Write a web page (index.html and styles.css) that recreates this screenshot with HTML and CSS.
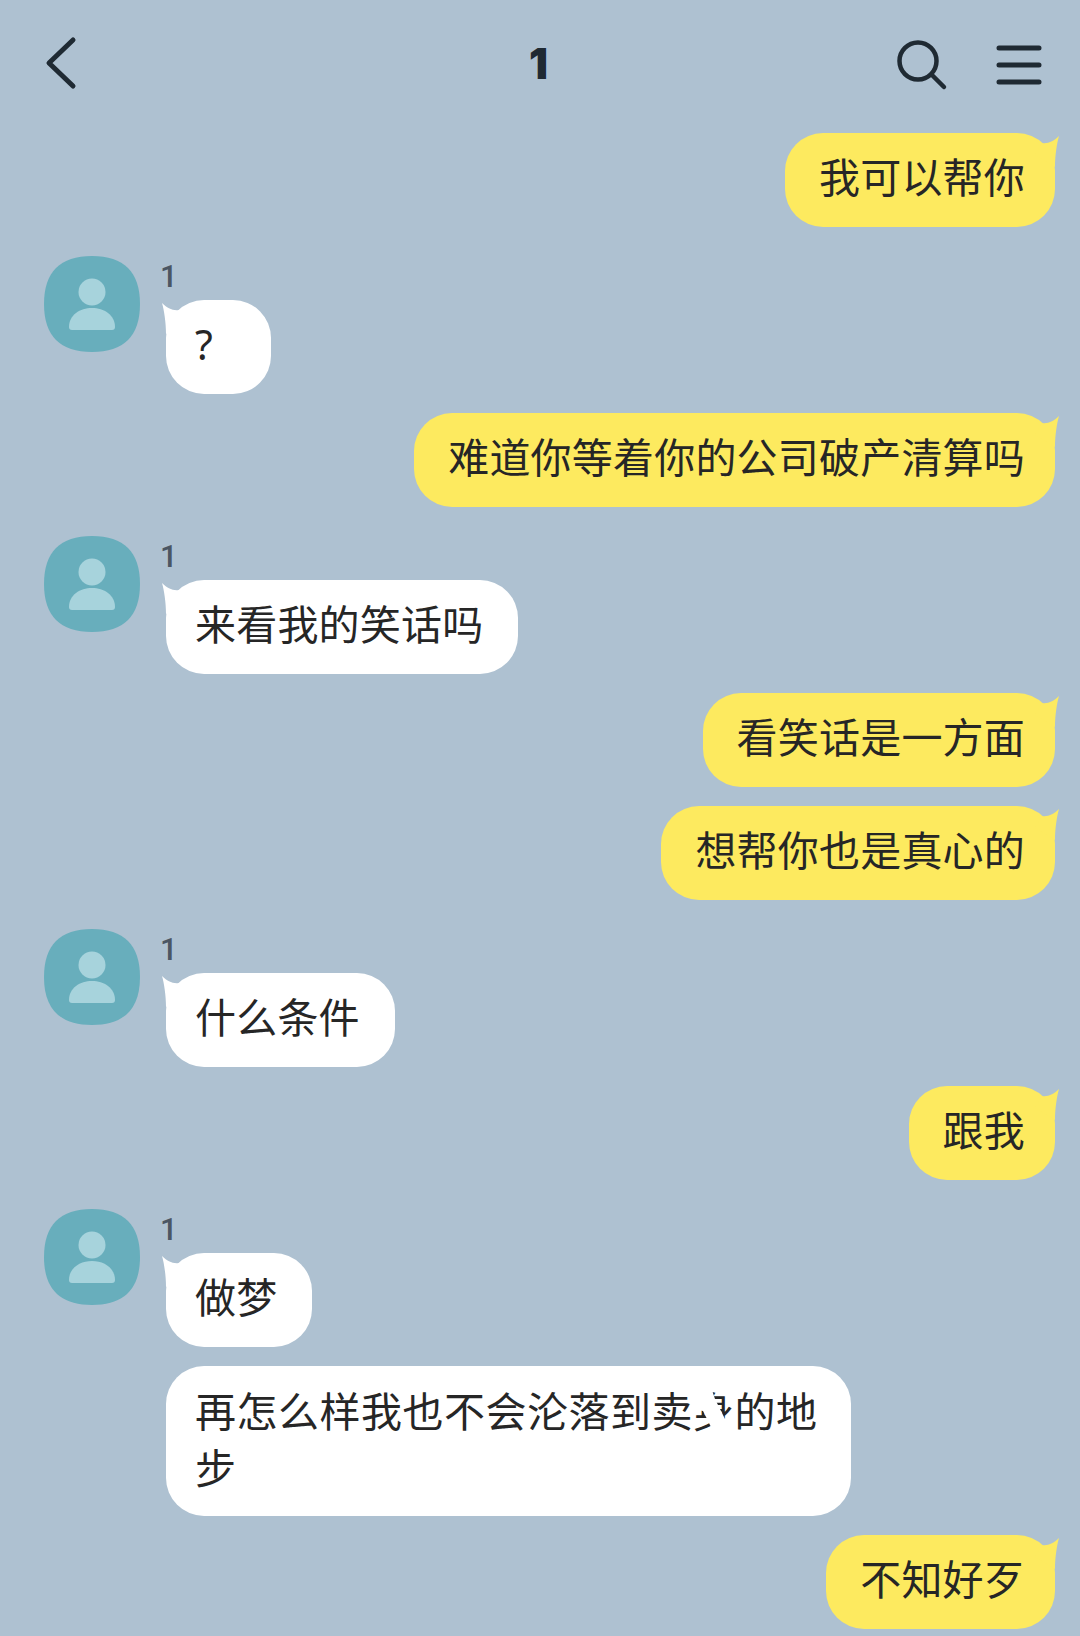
FILE: index.html
```html
<!DOCTYPE html>
<html lang="zh">
<head>
<meta charset="utf-8">
<title>1</title>
<link rel="stylesheet" href="styles.css">
</head>
<body>
<svg class="defs" width="0" height="0" aria-hidden="true">
  <symbol id="avatar" viewBox="0 0 96 96">
    <path d="M48 0C80 0 96 16 96 48S80 96 48 96 0 80 0 48 16 0 48 0Z" fill="#68aebc"/>
    <circle cx="48" cy="36" r="13.5" fill="#a7d3dc"/>
    <path d="M25 71C25 59 36 52 48 52S71 59 71 71C71 73 70 74 68 74H28C26 74 25 73 25 71Z" fill="#a7d3dc"/>
  </symbol>
</svg>
<main class="phone">
  <header class="topbar">
    <svg class="icon-back" width="34" height="56" viewBox="0 0 34 56"><path d="M28 5 L4 28 L28 51" /></svg>
    <h1 class="title">1</h1>
    <div class="actions">
      <svg class="icon-search" width="52" height="52" viewBox="0 0 52 52"><circle cx="22" cy="22" r="18.500"/><path d="M35.500 35.500 L48 48"/></svg>
      <svg class="icon-menu" width="46" height="40" viewBox="0 0 46 40"><path d="M3 3H43M3 20H43M3 37H43"/></svg>
    </div>
  </header>
  <section class="chat">
    <div class="msg me">我可以帮你</div>
    <div class="group">
      <svg class="avatar"><use href="#avatar"/></svg>
      <div class="stack"><div class="name">1</div><div class="msg other first q">?</div></div>
    </div>
    <div class="msg me">难道你等着你的公司破产清算吗</div>
    <div class="group">
      <svg class="avatar"><use href="#avatar"/></svg>
      <div class="stack"><div class="name">1</div><div class="msg other first">来看我的笑话吗</div></div>
    </div>
    <div class="msg me">看笑话是一方面</div>
    <div class="msg me">想帮你也是真心的</div>
    <div class="group">
      <svg class="avatar"><use href="#avatar"/></svg>
      <div class="stack"><div class="name">1</div><div class="msg other first">什么条件</div></div>
    </div>
    <div class="msg me">跟我</div>
    <div class="group">
      <svg class="avatar"><use href="#avatar"/></svg>
      <div class="stack">
        <div class="name">1</div>
        <div class="msg other first">做梦</div>
        <div class="msg other wide">再怎么样我也不会沦落到卖身的地步<span class="smudge"></span></div>
      </div>
    </div>
    <div class="msg me">不知好歹</div>
  </section>
</main>
</body>
</html>
```
FILE: styles.css
```css
* { box-sizing: border-box; }
html, body { margin: 0; padding: 0; }
body {
  width: 1080px;
  height: 1636px;
  overflow: hidden;
  background: #aec1d1;
  font-family: "Noto Sans CJK SC", "Noto Sans", sans-serif;
  color: #262626;
}
.defs { position: absolute; }
.phone { padding: 0 25px 0 44px; }
.topbar {
  height: 133px;
  display: flex;
  align-items: center;
  justify-content: space-between;
  position: relative;
  padding-bottom: 9px;
  padding-right: 13px;
}
.topbar svg { fill: none; stroke: #1f2a33; stroke-linecap: round; stroke-linejoin: round; }
.icon-back { stroke-width: 5; margin-top: 2px; margin-left: 1px; }
.icon-search { stroke-width: 4.500; margin-top: -2px; margin-left: -1px; }
.icon-menu { stroke-width: 5; margin-top: -2px; }
.title {
  position: absolute;
  left: 485px;
  top: 38px;
  margin: 0;
  font: 900 42px/52px "Inter", "Noto Sans", sans-serif;
  color: #1f2a33;
}
.actions { display: flex; align-items: center; gap: 48px; margin-top: 8px; }
.chat { display: flex; flex-direction: column; gap: 19px; }
.msg {
  position: relative;
  width: fit-content;
  min-height: 94px;
  padding: 15px 30px 24px 34px;
  border-radius: 38px;
  font-size: 41px;
  line-height: 55px;
  letter-spacing: 0.2px;
}
.msg::before {
  content: "";
  position: absolute;
  top: 2px;
  width: 30px;
  height: 40px;
}
.me { align-self: flex-end; background: #fdea5f; }
.me::before {
  right: -5px;
  background: #fdea5f;
  clip-path: path("M29 1C27 8 25 20 25 32L5 20L12 8C18 9 24 6 29 1Z");
}
.other { background: #fff; padding: 15px 35px 24px 29px; }
.other.first::before {
  left: -5px;
  background: #fff;
  clip-path: path("M1 1C3 8 5 20 5 32L25 20L18 8C12 9 6 6 1 1Z");
}
.q { width: 105px; padding-top: 17px; padding-bottom: 22px; font-family: "Noto Sans", sans-serif; }
.wide { width: 685px; padding-right: 26px; padding-bottom: 21px; line-height: 57px; letter-spacing: 0.5px; }
.group { display: flex; gap: 26px; margin-top: 10px; }
.avatar { width: 96px; height: 96px; flex: none; }
.stack { display: flex; flex-direction: column; gap: 19px; }
.name {
  height: 26px;
  font: 500 31px/26px "Roboto", "Noto Sans", sans-serif;
  color: #4b5663;
  margin: 8px 0 -9px -6px;
}
.smudge {
  position: absolute;
  left: 525px;
  top: 21px;
  width: 46px;
  height: 52px;
  background: #fff;
  clip-path: polygon(2px 0, 20px 0, 24px 12px, 30px 24px, 34px 32px, 45px 24px, 45px 52px, 24px 52px, 20px 40px, 12px 24px, 2px 22px);
}
```
